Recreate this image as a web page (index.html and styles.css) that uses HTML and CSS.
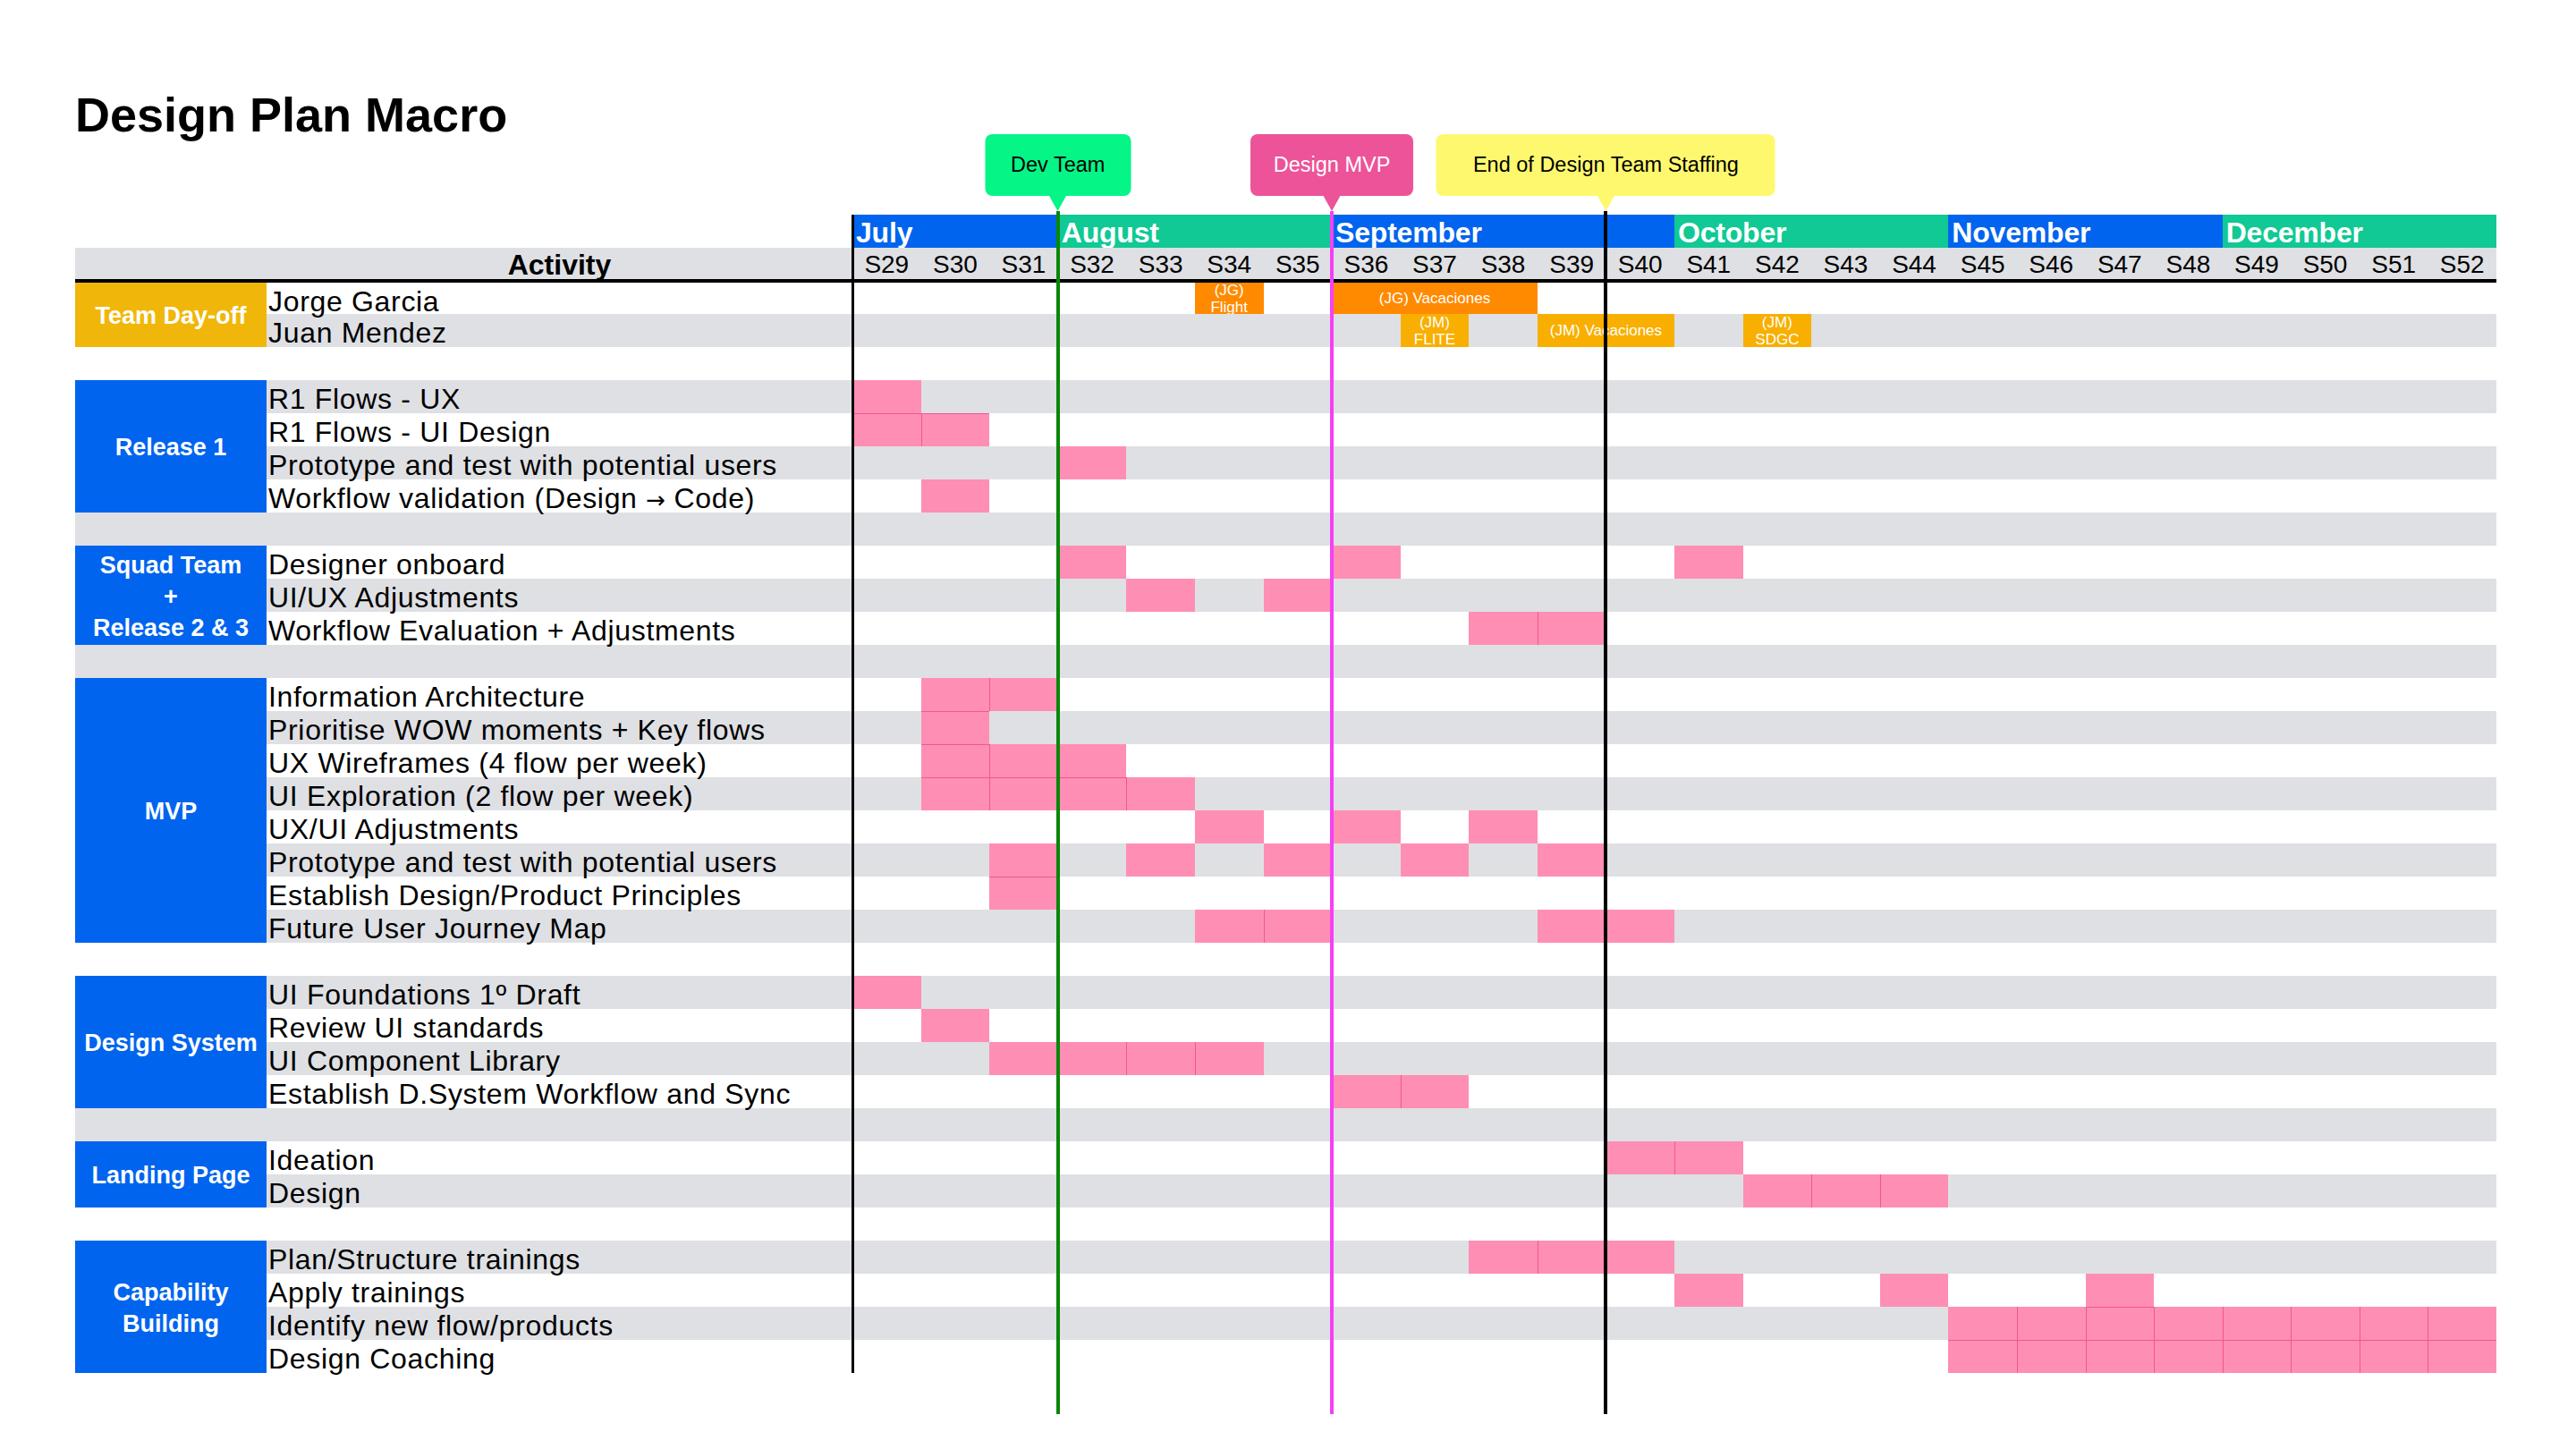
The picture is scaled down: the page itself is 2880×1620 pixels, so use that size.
FILE: index.html
```html
<!DOCTYPE html>
<html lang="en">
<head>
<meta charset="utf-8">
<title>Design Plan Macro</title>
<link rel="stylesheet" href="styles.css">
</head>
<body>
<div class="page">
  <div class="chart">
    <div class="top">
      <h1 class="title">Design Plan Macro</h1>
    </div>

    <div class="months">
      <div class="month b m3">July</div>
      <div class="month gr m4">August</div>
      <div class="month b m5">September</div>
      <div class="month gr m4">October</div>
      <div class="month b m4">November</div>
      <div class="month gr m4">December</div>
    </div>

    <div class="weeks">
      <div class="act-h">Activity</div>
      <div class="wk">S29</div><div class="wk">S30</div><div class="wk">S31</div><div class="wk">S32</div>
      <div class="wk">S33</div><div class="wk">S34</div><div class="wk">S35</div><div class="wk">S36</div>
      <div class="wk">S37</div><div class="wk">S38</div><div class="wk">S39</div><div class="wk">S40</div>
      <div class="wk">S41</div><div class="wk">S42</div><div class="wk">S43</div><div class="wk">S44</div>
      <div class="wk">S45</div><div class="wk">S46</div><div class="wk">S47</div><div class="wk">S48</div>
      <div class="wk">S49</div><div class="wk">S50</div><div class="wk">S51</div><div class="wk">S52</div>
    </div>
    <div class="rule"></div>

    <div class="body">
      <div class="group">
        <div class="label amber">Team Day-off</div>
        <div class="rows">
          <div class="row first">
            <div class="act">Jorge Garcia</div>
            <span class="bar jg w6"><span>(JG)<br>Flight</span></span>
            <span class="bar jg w8 s3"><span>(JG) Vacaciones</span></span>
          </div>
          <div class="row g">
            <div class="act">Juan Mendez</div>
            <span class="bar jm w9"><span>(JM)<br>FLITE</span></span>
            <span class="bar jm w11 s2"><span>(JM) Vacaciones</span></span>
            <span class="bar jm w14"><span>(JM)<br>SDGC</span></span>
          </div>
        </div>
      </div>
      <div class="gap"></div>

      <div class="group">
        <div class="label">Release 1</div>
        <div class="rows">
          <div class="row g"><div class="act">R1 Flows - UX</div><i class="c w1"></i></div>
          <div class="row"><div class="act">R1 Flows - UI Design</div><i class="c w1 t"></i><i class="c w2 l t"></i></div>
          <div class="row g"><div class="act">Prototype and test with potential users</div><i class="c w4"></i></div>
          <div class="row"><div class="act">Workflow validation (Design <span class="arrow">→</span> Code)</div><i class="c w2"></i></div>
        </div>
      </div>
      <div class="gap g"></div>

      <div class="group">
        <div class="label">Squad Team<br>+<br>Release 2 &amp; 3</div>
        <div class="rows">
          <div class="row"><div class="act">Designer onboard</div><i class="c w4"></i><i class="c w8"></i><i class="c w13"></i></div>
          <div class="row g"><div class="act">UI/UX Adjustments</div><i class="c w5"></i><i class="c w7"></i></div>
          <div class="row"><div class="act">Workflow Evaluation + Adjustments</div><i class="c w10"></i><i class="c w11 l"></i></div>
        </div>
      </div>
      <div class="gap g"></div>

      <div class="group">
        <div class="label">MVP</div>
        <div class="rows">
          <div class="row"><div class="act">Information Architecture</div><i class="c w2"></i><i class="c w3 l"></i></div>
          <div class="row g"><div class="act">Prioritise WOW moments + Key flows</div><i class="c w2 t"></i></div>
          <div class="row"><div class="act">UX Wireframes (4 flow per week)</div><i class="c w2 t"></i><i class="c w3 l"></i><i class="c w4 l"></i></div>
          <div class="row g"><div class="act">UI Exploration (2 flow per week)</div><i class="c w2 t"></i><i class="c w3 l t"></i><i class="c w4 l t"></i><i class="c w5 l"></i></div>
          <div class="row"><div class="act">UX/UI Adjustments</div><i class="c w6"></i><i class="c w8"></i><i class="c w10"></i></div>
          <div class="row g"><div class="act">Prototype and test with potential users</div><i class="c w3"></i><i class="c w5"></i><i class="c w7"></i><i class="c w9"></i><i class="c w11"></i></div>
          <div class="row"><div class="act">Establish Design/Product Principles</div><i class="c w3 t"></i></div>
          <div class="row g"><div class="act">Future User Journey Map</div><i class="c w6"></i><i class="c w7 l"></i><i class="c w11"></i><i class="c w12 l"></i></div>
        </div>
      </div>
      <div class="gap"></div>

      <div class="group">
        <div class="label">Design System</div>
        <div class="rows">
          <div class="row g"><div class="act">UI Foundations 1º Draft</div><i class="c w1"></i></div>
          <div class="row"><div class="act">Review UI standards</div><i class="c w2"></i></div>
          <div class="row g"><div class="act">UI Component Library</div><i class="c w3"></i><i class="c w4 l"></i><i class="c w5 l"></i><i class="c w6 l"></i></div>
          <div class="row"><div class="act">Establish D.System Workflow and Sync</div><i class="c w8"></i><i class="c w9 l"></i></div>
        </div>
      </div>
      <div class="gap g"></div>

      <div class="group">
        <div class="label">Landing Page</div>
        <div class="rows">
          <div class="row"><div class="act">Ideation</div><i class="c w12"></i><i class="c w13 l"></i></div>
          <div class="row g"><div class="act">Design</div><i class="c w14"></i><i class="c w15 l"></i><i class="c w16 l"></i></div>
        </div>
      </div>
      <div class="gap"></div>

      <div class="group">
        <div class="label">Capability<br>Building</div>
        <div class="rows">
          <div class="row g"><div class="act">Plan/Structure trainings</div><i class="c w10"></i><i class="c w11 l"></i><i class="c w12 l"></i></div>
          <div class="row"><div class="act">Apply trainings</div><i class="c w13"></i><i class="c w16"></i><i class="c w19"></i></div>
          <div class="row g"><div class="act">Identify new flow/products</div><i class="c w17"></i><i class="c w18 l"></i><i class="c w19 l t"></i><i class="c w20 l"></i><i class="c w21 l"></i><i class="c w22 l"></i><i class="c w23 l"></i><i class="c w24 l"></i></div>
          <div class="row"><div class="act">Design Coaching</div><i class="c w17 t"></i><i class="c w18 l t"></i><i class="c w19 l t"></i><i class="c w20 l t"></i><i class="c w21 l t"></i><i class="c w22 l t"></i><i class="c w23 l t"></i><i class="c w24 l t"></i></div>
        </div>
      </div>
    </div>

    <div class="overlay">
      <div class="edge"></div>
      <div class="marker dev" style="left:12.5%"><div class="flag">Dev Team</div></div>
      <div class="marker mvp" style="left:29.1667%"><div class="flag">Design MVP</div></div>
      <div class="marker end" style="left:45.8333%"><div class="flag">End of Design Team Staffing</div></div>
    </div>
  </div>
</div>
</body>
</html>
```

FILE: styles.css
```css
* { box-sizing: border-box; }
html, body { margin: 0; background: #fff; }
body {
  font-family: "Liberation Sans", Arial, sans-serif;
  color: #000;
}

.page { padding-left: 84px; }

.chart {
  position: relative;
  width: 2707px;
  padding-bottom: 46px;
}

/* title area */
.top { height: 240px; }
.title {
  margin: 0;
  padding-top: 96px;
  font-size: 54px;
  line-height: 64px;
  font-weight: 700;
}

/* month bar */
.months {
  display: grid;
  grid-template-columns: repeat(24, 1fr);
  margin-left: 869px;
  height: 37px;
}
.month {
  color: #fff;
  font-weight: 700;
  font-size: 32px;
  line-height: 37px;
  padding: 2px 0 0 4px;
  white-space: nowrap;
  overflow: hidden;
  letter-spacing: -0.2px;
}
.month.b { background: #0064ee; }
.month.gr { background: #10c994; }
.m3 { grid-column: span 3; }
.m4 { grid-column: span 4; }
.m5 { grid-column: span 5; }

/* week header */
.weeks {
  display: grid;
  grid-template-columns: 214px 655px repeat(24, 1fr);
  height: 35px;
  background: #dfe0e4;
}
.act-h {
  grid-column: 2;
  text-align: center;
  font-weight: 700;
  font-size: 32px;
  line-height: 38px;
}
.wk {
  text-align: center;
  font-size: 28px;
  line-height: 38px;
}
.rule { height: 4px; background: #000; }

/* body */
.group { display: flex; }
.label {
  width: 214px;
  flex: none;
  display: flex;
  align-items: center;
  justify-content: center;
  text-align: center;
  padding-top: 3px;
  color: #fff;
  font-weight: 700;
  font-size: 27px;
  line-height: 35px;
  background: #0064ee;
}
.label.amber { background: #f0b70a; }
.rows { flex: 1; min-width: 0; }

.row {
  display: grid;
  grid-template-columns: 655px repeat(24, 1fr);
  grid-template-rows: 37px;
  height: 37px;
}
.row.first { grid-template-rows: 35px; height: 35px; }
.gap { height: 37px; }
.g { background: #dfe0e4; }

.act {
  grid-column: 1;
  grid-row: 1;
  align-self: start;
  padding: 3px 0 0 2px;
  font-size: 32px;
  line-height: 37px;
  letter-spacing: 0.68px;
  white-space: nowrap;
}
.arrow {
  font-family: "DejaVu Sans", sans-serif;
  font-size: 26px;
  letter-spacing: 0;
}

/* pink work cells */
.c {
  display: block;
  grid-row: 1;
  background: #ff8eb4;
}
.c.l { box-shadow: inset 1px 0 0 #f2578c; }
.c.t { box-shadow: inset 0 1px 0 #f2578c; }
.c.l.t { box-shadow: inset 1px 1px 0 #f2578c; }

.w1 { grid-column-start: 2; }
.w2 { grid-column-start: 3; }
.w3 { grid-column-start: 4; }
.w4 { grid-column-start: 5; }
.w5 { grid-column-start: 6; }
.w6 { grid-column-start: 7; }
.w7 { grid-column-start: 8; }
.w8 { grid-column-start: 9; }
.w9 { grid-column-start: 10; }
.w10 { grid-column-start: 11; }
.w11 { grid-column-start: 12; }
.w12 { grid-column-start: 13; }
.w13 { grid-column-start: 14; }
.w14 { grid-column-start: 15; }
.w15 { grid-column-start: 16; }
.w16 { grid-column-start: 17; }
.w17 { grid-column-start: 18; }
.w18 { grid-column-start: 19; }
.w19 { grid-column-start: 20; }
.w20 { grid-column-start: 21; }
.w21 { grid-column-start: 22; }
.w22 { grid-column-start: 23; }
.w23 { grid-column-start: 24; }
.w24 { grid-column-start: 25; }
.s2 { grid-column-end: span 2; }
.s3 { grid-column-end: span 3; }

/* day-off bars */
.bar {
  grid-row: 1;
  display: flex;
  align-items: center;
  justify-content: center;
  text-align: center;
  color: #fff;
  font-size: 17px;
  line-height: 19px;
  overflow: hidden;
  white-space: nowrap;
}
.bar.jg { background: #ff8a00; }
.bar.jm { background: #f8af00; }

/* overlays: timeline edge and milestone markers */
.overlay {
  position: absolute;
  left: 869px;
  top: 0;
  bottom: 0;
  width: 1838px;
  pointer-events: none;
}
.edge {
  position: absolute;
  left: -1px;
  top: 240px;
  bottom: 46px;
  width: 3px;
  background: #000;
}
.marker {
  position: absolute;
  top: 150px;
  bottom: 0;
  width: 0;
}
.marker::after {
  content: "";
  position: absolute;
  top: 86px;
  bottom: 0;
  left: -2px;
  width: 4px;
  background: var(--line);
}
.flag {
  position: absolute;
  top: 0;
  left: 0;
  transform: translateX(-50%);
  height: 69px;
  border-radius: 8px;
  background: var(--flag);
  font-size: 23.5px;
  line-height: 69px;
  text-align: center;
  white-space: nowrap;
}
.flag::after {
  content: "";
  position: absolute;
  left: 50%;
  top: 68px;
  margin-left: -10px;
  border-left: 10px solid transparent;
  border-right: 10px solid transparent;
  border-top: 18px solid var(--flag);
}
.dev { --flag: #05f587; --line: #0a860a; }
.dev .flag { width: 163px; color: #000; }
.mvp { --flag: #ec5399; --line: #f540f5; }
.mvp .flag { width: 182px; color: #fff; }
.end { --flag: #fef86f; --line: #000; }
.end .flag { width: 379px; color: #000; }
```
